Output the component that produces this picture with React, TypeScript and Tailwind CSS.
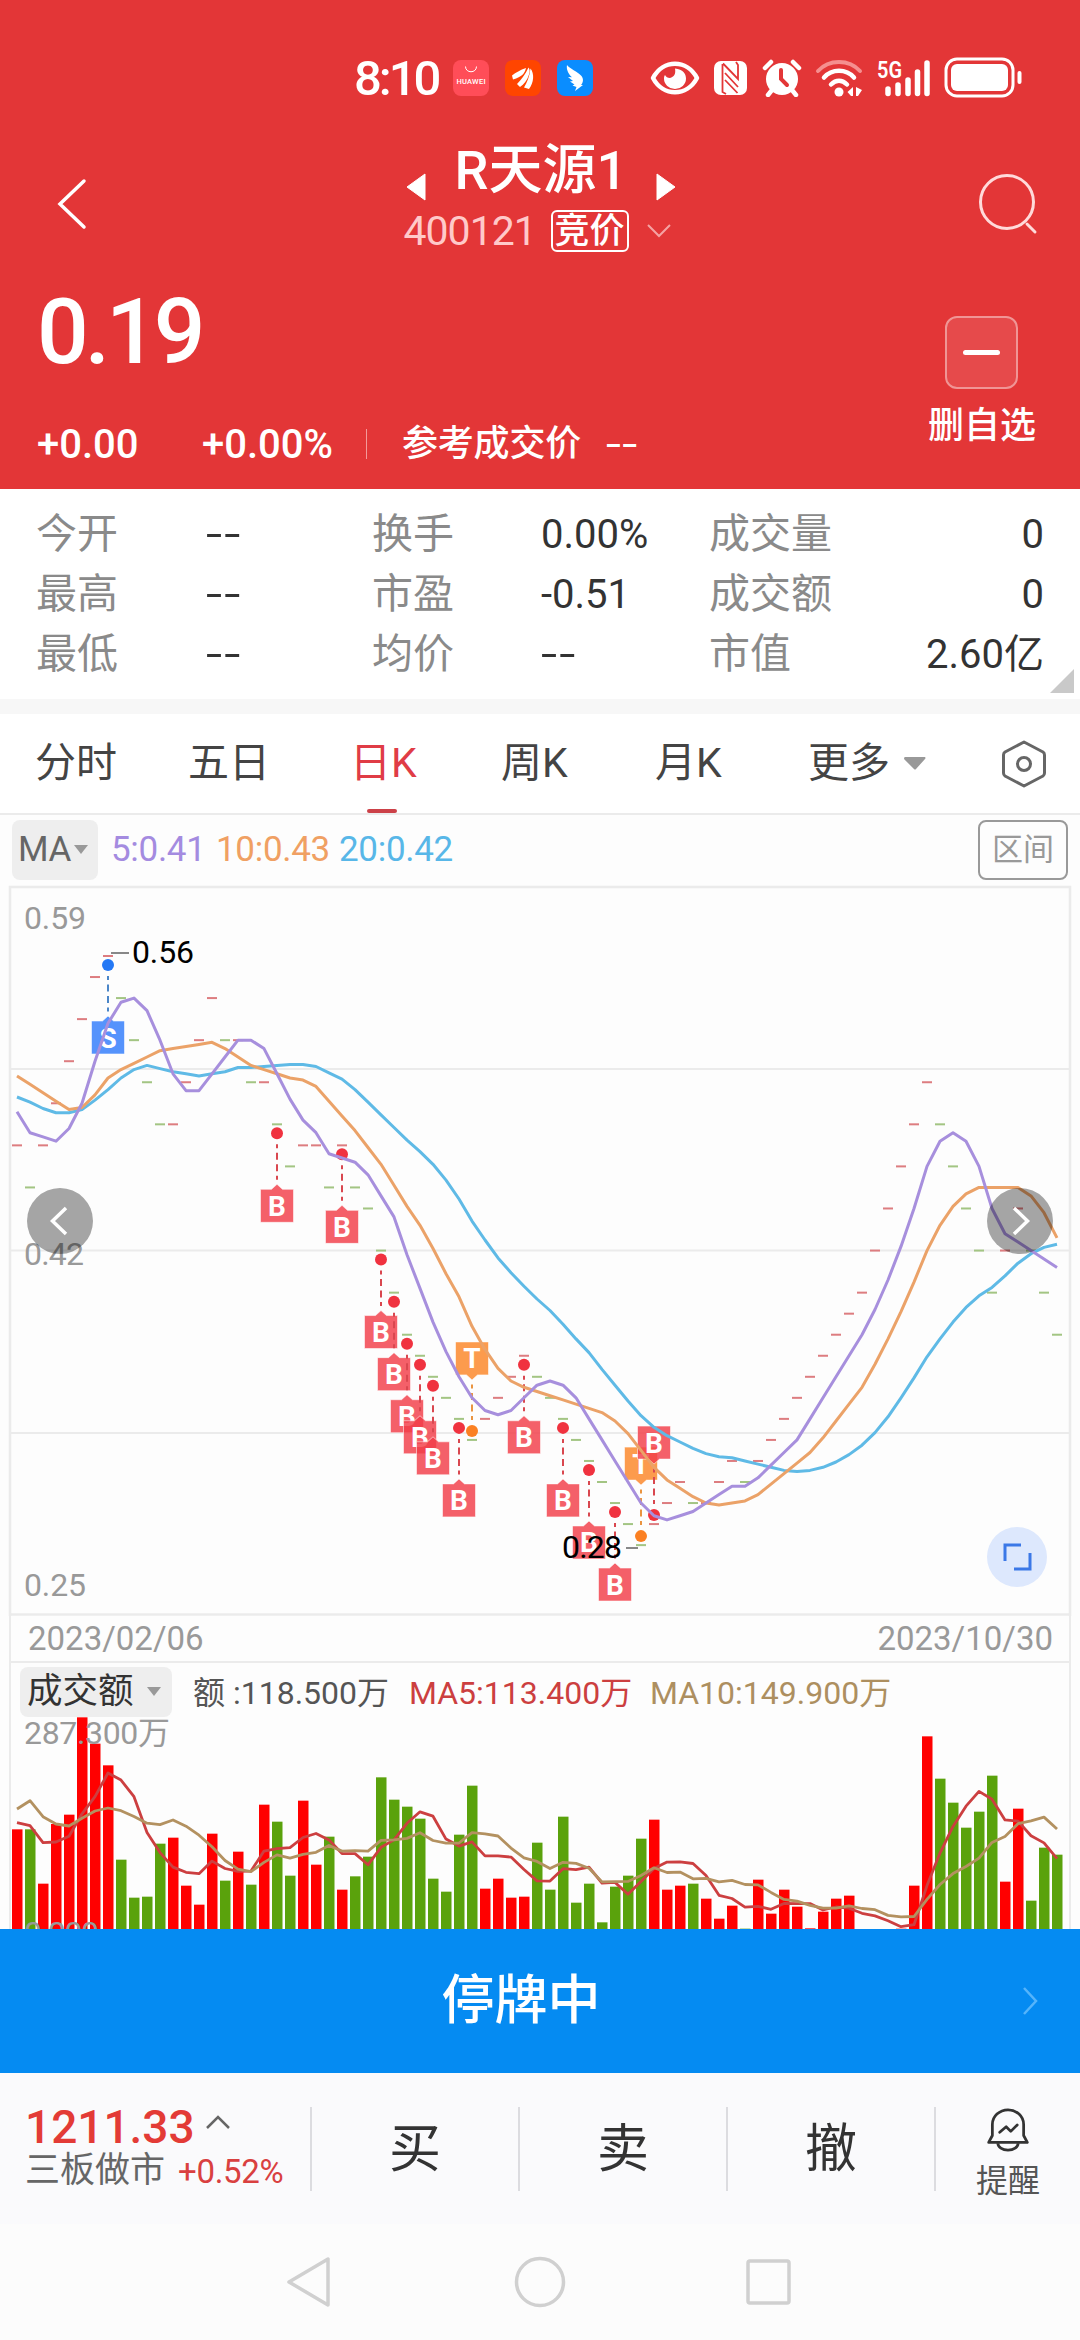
import React from "react";
import { clsx } from "clsx";

type Side = "r" | "g";

interface Marker {
  i: number;
  label: "B" | "S" | "T";
  up?: boolean;
}

const RED = "#e33637";

// close price in cents, one per session
const closes = [
  47, 45, 47, 49, 51, 53, 55, 56, 54, 52, 50, 48, 48, 50, 52, 54, 52, 52, 50, 50,
  48, 46, 47, 47, 45, 47, 45, 44, 42, 40, 38, 37, 36, 35, 34, 33, 34, 35, 36, 37,
  36, 35, 34, 33, 32, 31, 30, 29, 28, 29, 30, 31, 30, 30, 31, 32, 31, 32, 33, 34,
  35, 36, 37, 38, 39, 40, 42, 44, 46, 48, 50, 48, 46, 44, 42, 40, 42, 44, 42, 40,
  38,
];

const sides = (
  "rgrrrrrrgggg" + "rrrrgrgrggrrgrgg" + "ggggggggrrrrggggggggg" + "rrrgrrrgrrrrrrrrrrrrrrgggggrrggg"
).split("") as Side[];

// turnover per session, 701 = 287.3万
const amounts = [
  365, 365, 202, 381, 409, 701, 622, 557, 274, 160, 163, 322, 340, 196, 139, 352, 211, 298, 199, 439,
  388, 226, 451, 259, 343, 184, 224, 283, 521, 454, 433, 397, 217, 178, 349, 496, 187, 217, 160, 163,
  325, 184, 403, 145, 202, 86, 193, 226, 337, 394, 184, 196, 202, 157, 97, 136, 67, 214, 112, 184,
  133, 68, 118, 157, 166, 57, 29, 45, 67, 196, 644, 517, 445, 370, 418, 526, 208, 427, 151, 310,
  289,
];

// averages of the sessions whose window starts before the visible range
const ma5Head = [48.6, 47.6, 47.4, 47.2];
const ma10Head = [50.3, 49.9, 49.5, 49.1, 48.7, 48.8, 49.4, 50.2, 50.6];
const ma20Head = [
  49.3, 49.05, 48.75, 48.55, 48.55, 48.7, 49.15, 49.65, 50.2, 50.6, 50.8, 50.65, 50.5, 50.4, 50.3, 50.4, 50.5, 50.7, 50.7,
];
const amt5Head = [385, 376, 325, 327];
const amt10Head = [426, 451, 403, 381, 375, 398, 420, 429, 421];

const markers: Marker[] = [
  { i: 7, label: "S" },
  ...[20, 25, 28, 29, 30, 31, 32, 34].map((i): Marker => ({ i, label: "B" })),
  { i: 35, label: "T", up: true },
  ...[39, 42, 44, 46].map((i): Marker => ({ i, label: "B" })),
  { i: 48, label: "T", up: true },
  { i: 49, label: "B", up: true },
];

const markerColors = {
  B: { box: "#f23d48", dot: "#f0323f", stem: "#d9474f" },
  S: { box: "#2f7bfb", dot: "#2478f5", stem: "#4a86c8" },
  T: { box: "#fb8526", dot: "#fb8022", stem: "#ea9440" },
};

const stats = [
  ["今开", "--", "换手", "0.00%", "成交量", "0"],
  ["最高", "--", "市盈", "-0.51", "成交额", "0"],
  ["最低", "--", "均价", "--", "市值", "2.60亿"],
];

const xOf = (i: number) => 17 + 13 * i;
const priceY = (c: number) => 72 + (56 - c) * 21.04;
const amountY = (a: number) => 234 - a / 3;

function average(data: number[], n: number, head: number[]) {
  return data.map((_, i) =>
    i < n - 1 ? head[i] : data.slice(i - n + 1, i + 1).reduce((a, b) => a + b, 0) / n
  );
}

const toPoints = (data: number[], y: (v: number) => number) =>
  data.map((v, i) => `${xOf(i)},${y(v).toFixed(1)}`).join(" ");

function StatusBar() {
  return (
    <div className="h-[120px] shrink-0 flex items-center pl-[354px] pt-[36px] text-white">
      <div className="flex items-center h-[42px] w-[680px]">
        <span className="w-[99px] text-[49px] leading-none font-medium tracking-[-3px]">8:10</span>
        <svg width="36" height="36" viewBox="0 0 36 36">
          <rect width="36" height="36" rx="8" fill="#ff4d58" />
          <path d="M12.500 6.500c0 7 11 7 11 0" fill="none" stroke="#fff" strokeWidth="1" />
          <text x="3.500" y="23.500" fontSize="7.500" fontWeight="500" fill="#fff" textLength="29">HUAWEI</text>
        </svg>
        <svg className="ml-4" width="36" height="36" viewBox="0 0 36 36">
          <rect width="36" height="36" rx="8" fill="#ff4500" />
          <path d="M7 15.500C11 12.500 15 10 21 8c-1 5-4 9-13 11.500Z" fill="#fff" />
          <path d="M12 24c4-4 8-9 11.500-16.500 1.500 2 1.500 4 .5 7-2 6-5 10-9 12.500Z" fill="#fff" />
          <path d="M19 27.500c3-5 5.500-11 6.500-19 4 5 3.500 14-1.500 20.500Z" fill="#fff" />
        </svg>
        <svg className="ml-4" width="36" height="36" viewBox="0 0 36 36">
          <rect width="36" height="36" rx="8" fill="#0a8dff" />
          <path d="M10 5c2 3 11 7 14.500 11 2.500 3 1.500 7-.5 9h2l-8 6 1.500-4-4-1.500 2-1-4.500-3 3-.5-5-4 4 .3C12 14.500 9 10 10 5Z" fill="#fff" />
        </svg>
        <svg className="ml-[57px]" width="50" height="34" viewBox="0 0 50 34">
          <path d="M3 17C13-2 37-2 47 17 37 36 13 36 3 17Z" fill="none" stroke="#fff" strokeWidth="4.500" strokeLinejoin="round" />
          <path d="M25 7.500c8 1 11 5 11 10a11 10.500 0 0 1-22 0c0-1.500.3-2.500 1-3.500 1 2 2.500 3 5 3 4-1 6-4 5-9.500Z" fill="#fff" />
        </svg>
        <svg className="ml-[14px]" width="34" height="36" viewBox="0 0 34 36">
          <rect x="0" y="1" width="33" height="34" rx="7" fill="#fff" />
          <path d="M8.500 4v28l3.500 2M9 3.500l15 15.500V5l-2-3M11 13l13 14M11 20v0l12.500 13" stroke={RED} strokeWidth="1.800" fill="none" />
        </svg>
        <svg className="ml-[14px]" width="40" height="38" viewBox="0 0 40 38">
          <circle cx="20" cy="20" r="16" fill="#fff" />
          <path d="M3 9l6-6M37 9l-6-6M10 31l-4 5M30 31l4 5" stroke="#fff" strokeWidth="4.500" strokeLinecap="round" />
          <path d="M19 11v9l6 6" stroke={RED} strokeWidth="4" fill="none" strokeLinecap="round" />
        </svg>
        <svg className="ml-[13px]" width="50" height="38" viewBox="0 0 50 38">
          <path d="M3 12c11-12 31-12 42 0" stroke="#f58f8f" strokeWidth="4" fill="none" strokeLinecap="round" />
          <path d="M9 18.500c8-9 22-9 30 0" stroke="#fff" strokeWidth="4.500" fill="none" strokeLinecap="round" />
          <path d="M16 25.500c5-5 11-5 16 0" stroke="#fff" strokeWidth="4.500" fill="none" strokeLinecap="round" />
          <circle cx="24" cy="33" r="4.500" fill="#fff" />
          <path d="M38 28v9h-2l-3.500-4ZM41 37v-9l6 3-4 6Z" fill="#fff" />
        </svg>
        <svg className="ml-[12px]" width="55" height="38" viewBox="0 0 55 38">
          <text x="0" y="18.500" fontSize="24" fontWeight="600" fill="#fff" textLength="25" lengthAdjust="spacingAndGlyphs">5G</text>
          <path d="M11 30v4.500M21 26v8.500M31 21v13.500M40.500 13v21.500M50 4v30.500" stroke="#fff" strokeWidth="5.500" strokeLinecap="round" />
        </svg>
        <svg className="ml-[12px]" width="80" height="42" viewBox="0 0 80 42">
          <rect x="2" y="2" width="67" height="37" rx="11" fill="none" stroke="#fff" strokeWidth="3" />
          <rect x="7" y="7" width="57" height="27" rx="6" fill="#fff" />
          <path d="M75.500 16v9" stroke="#fff" strokeWidth="4" strokeLinecap="round" />
        </svg>
      </div>
    </div>
  );
}

function QuoteHeader() {
  return (
    <header className="h-[489px] flex flex-col bg-[#e33637] text-white">
      <StatusBar />
      <div className="h-[150px] shrink-0 flex items-start justify-between">
        <svg className="mt-[56px] ml-[54px]" width="36" height="56" viewBox="0 0 36 56">
          <path d="M30 5L6 28l24 23" fill="none" stroke="#fff" strokeWidth="3.500" strokeLinecap="round" />
        </svg>
        <div className="w-[300px] pt-[20px] ml-[19px]">
          <div className="flex items-center justify-center gap-[29px] h-[62px] -ml-[4px]">
            <svg className="mt-[31px]" width="20" height="28" viewBox="0 0 20 28"><path d="M19 1v26L1 14Z" fill="#fff" stroke="#fff" strokeLinejoin="round" /></svg>
            <h1 className="text-[54px] leading-none font-medium whitespace-nowrap w-[172px] text-center">R天源1</h1>
            <svg className="mt-[31px]" width="20" height="28" viewBox="0 0 20 28"><path d="M1 1v26l18-13Z" fill="#fff" stroke="#fff" strokeLinejoin="round" /></svg>
          </div>
          <div className="flex items-center h-[56px] pl-[11px] mt-[1px]">
            <span className="w-[147px] text-[41px] leading-none tracking-[-1px] text-[#ffc9c9]">400121</span>
            <span className="w-[78px] h-[42px] rounded-md border-[2.500px] border-white flex items-center justify-center text-[35px] leading-none font-medium shrink-0">
              竞价
            </span>
            <svg className="ml-[17px] shrink-0" width="26" height="16" viewBox="0 0 26 16">
              <path d="M2 2l11 11L24 2" fill="none" stroke="#f5a3a3" strokeWidth="2" />
            </svg>
          </div>
        </div>
        <svg className="mt-[51px] mr-[40px]" width="64" height="66" viewBox="0 0 64 66">
          <circle cx="31" cy="31" r="26.500" fill="none" stroke="#ffdada" strokeWidth="3" />
          <path d="M51 53l8 8" stroke="#ffdada" strokeWidth="3" strokeLinecap="round" />
        </svg>
      </div>
      <div className="flex-1 flex justify-between pl-[37px] pr-[44px]">
        <div className="h-[219px]">
          <div className="h-[126px] pt-[17px] text-[91px] leading-none font-medium tracking-[-4px]">0.19</div>
          <div className="h-[93px] pt-[29px] flex items-start text-[40px] leading-none font-medium">
            <span className="w-[165px]">+0.00</span>
            <span className="w-[164px]">+0.00%</span>
            <span className="w-px h-[30px] mt-[4px] bg-[#f39a9a]" />
            <span className="ml-[35px] mt-px w-[204px] text-[36px] tracking-[-0.200px]">参考成交价</span>
            <span className="inline-block origin-left scale-x-[1.35] tracking-[1px] font-normal">--</span>
          </div>
        </div>
        <div className="h-[219px] pt-[46px] flex flex-col items-center">
          <div className="size-[73px] rounded-[12px] border-2 border-[#f09595] bg-white/10 flex items-center justify-center">
            <span className="w-[37px] h-[5px] rounded-full bg-white" />
          </div>
          <span className="mt-[19px] text-[36px] leading-none font-medium">删自选</span>
        </div>
      </div>
    </header>
  );
}

function Stats() {
  return (
    <section className="h-[210px] bg-white pt-[15px] pl-[36px] pr-[36px] relative">
      {stats.map((row) => (
        <div key={row[0]} className="h-[60px] flex items-center text-[41px] leading-none whitespace-nowrap">
          {row.map((cell, i) => (
            <span
              key={i}
              className={clsx(
                i % 2 === 0 ? "text-[#8a8a8a]" : "text-[#333] text-[40px] pt-[2px]",
                i === 0 && "w-[170px]",
                i === 1 && "w-[166px]",
                i === 2 && "w-[169px]",
                i === 3 && "w-[168px]",
                i === 5 && "ml-auto"
              )}
            >
              {cell === "--" ? (
                <span className="inline-block origin-left scale-x-[1.45] tracking-[1.500px]">--</span>
              ) : (
                cell
              )}
            </span>
          ))}
        </div>
      ))}
      <svg className="absolute right-[6px] bottom-[6px]" width="24" height="24" viewBox="0 0 24 24">
        <path d="M24 0v24H0Z" fill="#c9c9c9" />
      </svg>
    </section>
  );
}

function Tabs() {
  return (
    <nav className="h-[101px] flex items-center pl-[35px] bg-white border-b-2 border-[#ebebeb] text-[41px] leading-none text-[#444] whitespace-nowrap">
      <span className="w-[153px]">分时</span>
      <span className="w-[162px]">五日</span>
      <span className="w-[151px] h-full relative flex items-center text-[#e03c46]">
        日K
        <span className="absolute left-[17px] bottom-0 w-[30px] h-[4px] rounded-full bg-[#cc4148]" />
      </span>
      <span className="w-[154px]">周K</span>
      <span className="w-[153px]">月K</span>
      <span className="w-[95px]">更多</span>
      <svg width="24" height="16" viewBox="0 0 24 16"><path d="M2 1h20q1 1 0 2L13 13q-1 1-2 0L1 3Q1 1 2 1Z" fill="#999" /></svg>
      <svg className="ml-[73px]" width="48" height="50" viewBox="0 0 48 50">
        <path d="M24 3l19 10q1.500 1 1.500 3v18q0 2-1.500 3L24 47 5 37q-1.500-1-1.500-3V16q0-2 1.500-3Z" fill="none" stroke="#666" strokeWidth="3" strokeLinejoin="round" />
        <circle cx="24" cy="25" r="6.500" fill="none" stroke="#666" strokeWidth="3" />
      </svg>
    </nav>
  );
}

function MaLegend() {
  return (
    <div className="h-[69px] flex items-center pl-[12px] pr-[12px] text-[35px] leading-none tracking-[-0.300px]">
      <div className="w-[86px] h-[60px] rounded-lg bg-[#eee] flex items-center pl-[6px] text-[#666]">
        MA
        <svg className="ml-[2px]" width="16" height="11" viewBox="0 0 16 11"><path d="M1 1h14L8 10Z" fill="#999" /></svg>
      </div>
      <span className="ml-[13px] w-[105px] text-[#a48be0]">5:0.41</span>
      <span className="w-[123px] text-[#f0a063]">10:0.43</span>
      <span className="text-[#58b7e8]">20:0.42</span>
      <div className="ml-auto w-[90px] h-[60px] rounded-lg border-2 border-[#999] flex items-center justify-center text-[31px] tracking-normal text-[#999]">
        区间
      </div>
    </div>
  );
}

function TradeMarker({ i, label, up }: Marker) {
  const c = markerColors[label];
  const x = xOf(i);
  const s = up ? -1 : 1;
  const y = priceY(closes[i]);
  const box = `M${x - 16.5} ${y + s * 65}h11L${x} ${y + s * 60}l5.500 ${s * 5}h11v${s * 33}h-33Z`;
  return (
    <g>
      <path d={box} fill={c.box} fillOpacity="0.82" stroke="#fff" strokeWidth="0.800" strokeOpacity="0.700" />
      <text x={x} y={y + s * 81.5 + 10} fontSize="28" fontWeight="700" fill="#fff" textAnchor="middle">{label}</text>
      <path d={`M${x} ${y + s * 20}v${s * 37}`} stroke={c.stem} strokeWidth="2" strokeDasharray="4 4.500 7 4.500 7 4.500" />
      <circle cx={x} cy={y + s * 9} r="6" fill={c.dot} />
    </g>
  );
}

function PriceChart() {
  return (
    <svg className="block" width="1080" height="732" viewBox="0 0 1080 732" fontSize="32">
      <path d="M10 185h1060M10 366.500h1060M10 549h1060" stroke="#ebebeb" strokeWidth="2" />
      <path d="M10 732V3h1060v729M10 730.500h1060" fill="none" stroke="#ebebeb" strokeWidth="2.500" />
      {closes.map((c, i) => (
        <rect key={i} x={xOf(i) - 5} y={priceY(c) - 1} width="10" height="2" fill={sides[i] === "r" ? "#dd7d80" : "#a3c583"} />
      ))}
      {markers.map((m) => <TradeMarker key={m.i} {...m} />)}
      <g fill="none" strokeWidth="3" strokeLinejoin="round">
        <polyline points={toPoints(average(closes, 20, ma20Head), priceY)} stroke="#5fbae6" />
        <polyline points={toPoints(average(closes, 10, ma10Head), priceY)} stroke="#eba268" />
        <polyline points={toPoints(average(closes, 5, ma5Head), priceY)} stroke="#a78fdd" />
      </g>
      <path d="M111 69h18M626 664h12" stroke="#888" strokeWidth="2" />
      <text x="132" y="79" textLength="62">0.56</text>
      <text x="562" y="673.500" textLength="60">0.28</text>
      <g fill="#999">
        <text x="24" y="45" textLength="62">0.59</text>
        <text x="24" y="381" textLength="60">0.42</text>
        <text x="24" y="711.500" textLength="62">0.25</text>
      </g>
      <circle cx="60" cy="337" r="33" fillOpacity="0.350" />
      <circle cx="1020" cy="337" r="33" fillOpacity="0.350" />
      <path d="M66 324L52.500 337l13.500 13M1014 324l13.500 13-13.500 13" fill="none" stroke="#fff" strokeWidth="3.500" />
      <circle cx="1017" cy="673" r="30" fill="#dde8fd" />
      <path d="M1021 661h-16v16M1030 669v16h-16" fill="none" stroke="#3b78e7" strokeWidth="3" />
    </svg>
  );
}

function AmountChart() {
  return (
    <svg className="block" width="1080" height="212" viewBox="0 0 1080 212" fontSize="32">
      <path d="M10 0v212M1070 0v212" stroke="#ebebeb" strokeWidth="2" />
      {amounts.map((a, i) => (
        <rect key={i} x={xOf(i) - 5} y={amountY(a)} width="10.500" height={a / 3} fill={sides[i] === "r" ? "#ff0000" : "#5aa20c"} />
      ))}
      <g fill="none" strokeWidth="2.800" strokeLinejoin="round">
        <polyline points={toPoints(average(amounts, 5, amt5Head), amountY)} stroke="#cc3f40" />
        <polyline points={toPoints(average(amounts, 10, amt10Head), amountY)} stroke="#b39160" />
      </g>
      <g fill="#999">
        <text x="24" y="27" textLength="146">287.300万</text>
        <text x="24" y="227" textLength="75">0.000</text>
      </g>
    </svg>
  );
}

function ActionBar() {
  return (
    <footer className="h-[151px] flex items-center bg-[#fafafc] text-[#333] leading-none">
      <div className="w-[310px] pl-[25px] whitespace-nowrap">
        <div className="flex items-center h-[44px] text-[46px] font-medium text-[#e33b36]">
          1211.33
          <svg className="ml-[10px] mb-[9px]" width="26" height="16" viewBox="0 0 26 16">
            <path d="M2 14L13 3l11 11" fill="none" stroke="#666" strokeWidth="2.500" />
          </svg>
        </div>
        <div className="flex items-center h-[44px] text-[35px] text-[#666]">
          三板做市
          <span className="ml-[13px] pt-[2px] text-[33px] tracking-[-0.300px] text-[#d94040]">+0.52%</span>
        </div>
      </div>
      {["买", "卖", "撤"].map((t) => (
        <div key={t} className="w-[208px] h-[84px] border-l-2 border-[#dcdce0] flex items-center justify-center text-[52px]">
          <span className="pt-[3px]">{t}</span>
        </div>
      ))}
      <div className="flex-1 h-[84px] border-l-2 border-[#dcdce0] flex flex-col items-center justify-center text-[32px] text-[#555]">
        <svg width="48" height="50" viewBox="0 0 48 50" fill="none" stroke="#333" strokeWidth="3" strokeLinejoin="round">
          <path d="M7 31V19a17 16 0 0 1 34 0v12l4 7.500H3Z" />
          <path d="M13 39.500a11 7.500 0 0 0 22 0" />
          <path d="M15 27.500l7-6 5 5 7-7" strokeLinecap="round" />
        </svg>
        <span className="mt-[12px] -mb-[6px]">提醒</span>
      </div>
    </footer>
  );
}

export default function App() {
  return (
    <div className="w-[1080px] h-[2340px] overflow-hidden flex flex-col bg-[#fdfdfd] font-[Roboto,'Noto_Sans_CJK_SC',sans-serif] *:shrink-0">
      <QuoteHeader />
      <Stats />
      <div className="h-[15px] bg-[#f7f7f7]" />
      <Tabs />
      <MaLegend />
      <PriceChart />

      {/* Date range */}
      <div className="h-[47px] mx-[9px] px-[17px] border-x-2 border-b-2 border-[#ebebeb] flex items-center justify-between text-[33px] leading-none text-[#999]">
        <span>2023/02/06</span>
        <span className="-mr-px">2023/10/30</span>
      </div>

      {/* Turnover */}
      <div className="h-[54px] mx-[9px] pl-[9px] border-x-2 border-[#ebebeb] flex items-center text-[32px] leading-none whitespace-nowrap">
        <div className="w-[152px] h-[50px] mt-[3px] rounded-lg bg-[#eee] flex items-center pl-[7px] text-[35.500px] text-[#333]">
          成交额
          <svg className="ml-[12px]" width="16" height="11" viewBox="0 0 16 11"><path d="M1 1h14L8 10Z" fill="#999" /></svg>
        </div>
        <span className="ml-[21px] pt-[5px] w-[216px] text-[#555]">额 :118.500万</span>
        <span className="pt-[5px] w-[241px] text-[#cc3f40]">MA5:113.400万</span>
        <span className="pt-[5px] text-[#ad8f60]">MA10:149.900万</span>
      </div>
      <AmountChart />

      <div className="h-[144px] bg-[#058bf2] flex items-center text-white">
        <span className="w-[1016px] pl-[26px] text-center text-[53px] leading-none font-medium">停牌中</span>
        <svg className="ml-[2px]" width="24" height="32" viewBox="0 0 24 32">
          <path d="M6 3l12 13L6 29" fill="none" stroke="#55b4fb" strokeWidth="2.500" />
        </svg>
      </div>
      <ActionBar />

      {/* System navigation */}
      <div className="h-[116px] bg-[#fcfcfc] pt-[31px] pl-[283px]">
        <svg width="512" height="54" viewBox="0 0 512 54" fill="none" stroke="#d0d0d0" strokeWidth="3.500" strokeLinejoin="round">
          <path d="M45 4v46L6 27Z" />
          <circle cx="257" cy="27" r="23.500" />
          <rect x="465" y="6" width="41" height="42" rx="2" />
        </svg>
      </div>
    </div>
  );
}
